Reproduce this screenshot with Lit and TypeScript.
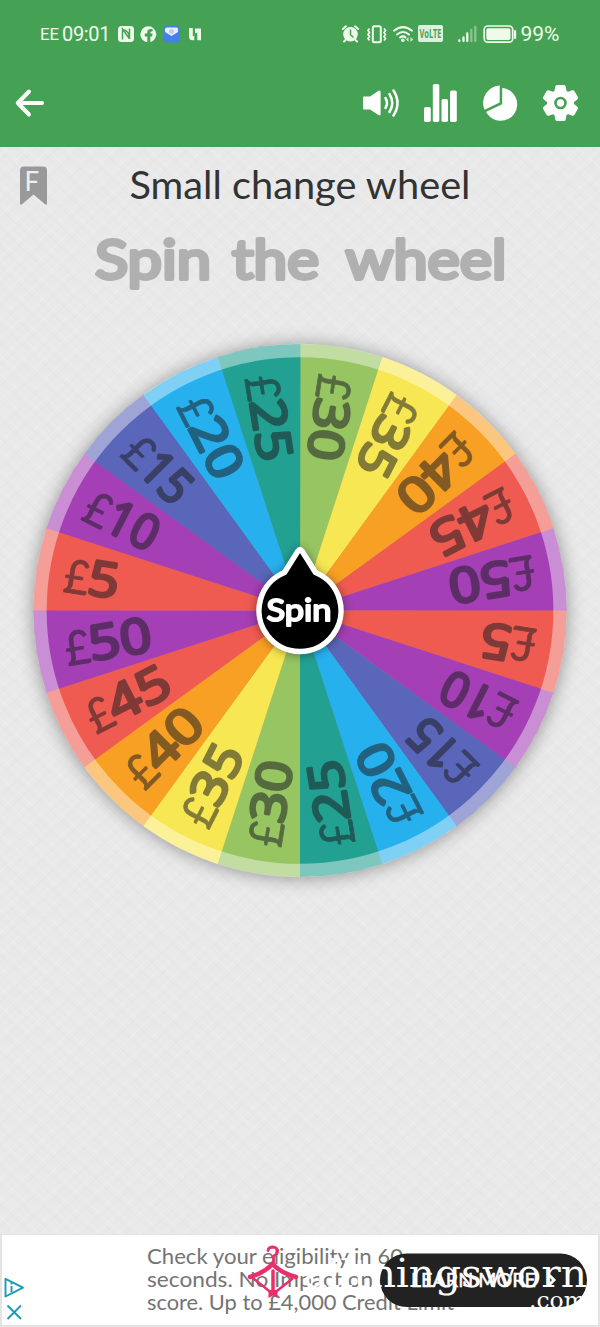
import { LitElement, html, css, svg } from "lit";
import { customElement } from "lit/decorators.js";

type Slice = { label: string; color: string; len: number };

const CYCLE: Slice[] = [
  { label: "30", color: "#96c562", len: 62 },
  { label: "35", color: "#f7e753", len: 61 },
  { label: "40", color: "#f8a024", len: 66 },
  { label: "45", color: "#ef5b51", len: 65 },
  { label: "50", color: "#a43fb5", len: 63 },
  { label: "5", color: "#ef5b51", len: 31 },
  { label: "10", color: "#a43fb5", len: 53 },
  { label: "15", color: "#5a66b9", len: 51 },
  { label: "20", color: "#27b0ee", len: 62 },
  { label: "25", color: "#22a193", len: 62 },
];
const SLICES = [...CYCLE, ...CYCLE];
const R = 266.5;

const point = (deg: number, r: number) => {
  const a = (deg * Math.PI) / 180;
  return `${(r * Math.sin(a)).toFixed(2)} ${(-r * Math.cos(a)).toFixed(2)}`;
};

@customElement("status-bar")
export class StatusBar extends LitElement {
  static styles = css`
    :host { display: block; height: 68px; }
    svg { display: block; }
    text { font-family: Roboto, sans-serif; fill: #effbea; }
    .volte { font-family: "Open Sans", sans-serif; font-weight: 700; fill: #45a254; }
  `;
  render() {
    return html`<svg width="600" height="68" viewBox="0 0 600 68">
      <text x="40" y="40.300" font-size="16" textLength="19" lengthAdjust="spacingAndGlyphs">EE</text>
      <text x="62" y="41" font-size="20" textLength="48.500">09:01</text>
      <rect x="118" y="26" width="16" height="16" rx="3.500" fill="#effbea"/>
      <path d="M122.500 39.500V29L129.500 38.800M122.700 29.500Q129.800 31 129.500 39V28.500" stroke="#45a254" stroke-width="1.500" fill="none"/>
      <circle cx="148.300" cy="34.300" r="8" fill="#effbea"/>
      <path d="M147.300 42.500V36.500H144.800V33.500H147.300V32C147.300 29.600 149 28.500 152.500 29V31.600C150.600 31.500 150.300 31.800 150.300 33.500H152.600L152.100 36.500H150.300V42.500Z" fill="#45a254"/>
      <rect x="163.500" y="26" width="16.500" height="16.500" rx="3" fill="#467fe6"/>
      <path d="M165 29Q165 27.500 167 27.500H176.500Q178 27.500 178 29V32L171.500 36L165 32Z" fill="#eaf2ff"/>
      <circle cx="171.500" cy="31.500" r="2.500" fill="#bccdf3"/>
      <path d="M189 28H192.800V36.500L194.300 35.500V40.300H192.500Q189 40 189 36.500ZM195 28.500H201V40.300H197.300V32.500L195 33.500Z" fill="#effbea"/>
      <g fill="#effbea" stroke="#effbea" stroke-linecap="round">
        <circle cx="350.500" cy="34.300" r="7.300" stroke="none"/>
        <path d="M342.800 29L346 26.300M355 26.300L358.200 29M345.500 40L344 41.500M355.500 40L357 41.500" stroke-width="2"/>
        <path d="M350.500 30V34.700L353 37" fill="none" stroke="#45a254" stroke-width="1.500"/>
      </g>
      <g fill="none" stroke="#effbea">
        <rect x="372.800" y="26.300" width="8" height="16" rx="1.500" stroke-width="2"/>
        <path d="M369.500 28.500L368 30.500L369.500 32.500L368 34.500L369.500 36.500L368 38.500L369.500 40.500M384 28.500L385.500 30.500L384 32.500L385.500 34.500L384 36.500L385.500 38.500L384 40.500" stroke-width="1.700"/>
        <g stroke-width="2" stroke-linecap="round">
          <path d="M394 30.700Q403 23.500 412 30.700M397 34.500Q403 29.500 409 34.500M400 37.500Q403 35.300 405.500 37.500"/>
        </g>
      </g>
      <circle cx="402.800" cy="40.300" r="1.800" fill="#effbea"/>
      <path d="M408.500 37V42L406 39.500ZM410.500 37V42L413.300 39.500Z" fill="#effbea" opacity=".8"/>
      <rect x="418" y="25" width="25" height="17" rx="2" fill="#dff1dc"/>
      <text class="volte" x="419.500" y="38.200" font-size="11.500" textLength="22" lengthAdjust="spacingAndGlyphs">VoLTE</text>
      <g stroke="#effbea" stroke-width="2.300" stroke-linecap="round">
        <path d="M459.300 40.300V41M463.500 37.500V41M467.300 33.500V41"/>
        <path d="M471.300 30V41M475.300 26.800V41" opacity=".4"/>
      </g>
      <rect x="484.200" y="26" width="28.500" height="16.200" rx="3.500" fill="none" stroke="#effbea" stroke-width="1.700"/>
      <rect x="486.300" y="28.200" width="24.200" height="11.800" rx="1.800" fill="#effbea"/>
      <rect x="514" y="30" width="2.200" height="9" rx="1" fill="#effbea"/>
      <text x="520.500" y="41" font-size="20" textLength="39" lengthAdjust="spacingAndGlyphs">99%</text>
    </svg>`;
  }
}

@customElement("tool-bar")
export class ToolBar extends LitElement {
  static styles = css`
    :host { display: flex; align-items: center; height: 70px; padding: 0 20px 0 14px; }
    .gap { flex: 1; }
    .tools { display: flex; gap: 20px; }
    svg { display: block; }
  `;
  render() {
    const teeth = [0, 60, 120, 180, 240, 300];
    return html`
      <svg width="32" height="32" viewBox="0 0 32 32">
        <path d="M28 16H4M15 4.500L3.800 16L15 27.500" fill="none" stroke="#fff" stroke-width="4" stroke-linecap="round" stroke-linejoin="round"/>
      </svg>
      <span class="gap"></span>
      <div class="tools">
        <svg width="40" height="40" viewBox="0 0 40 40">
          <path d="M4 13.500H10L18.500 7.800Q20.600 6.800 20.600 9V31Q20.600 33.200 18.500 32L10 26.500H4Q3 26.500 3 25.500V14.500Q3 13.500 4 13.500Z" fill="#fff"/>
          <path d="M25.500 15Q28.500 20 25.500 25M29.500 11Q35 20 29.500 29M33.500 7.500Q41.500 20 33.500 32.500" fill="none" stroke="#fff" stroke-width="2.500" stroke-linecap="round"/>
        </svg>
        <svg width="40" height="40" viewBox="0 0 40 40" fill="#fff">
          <rect x="4" y="24" width="6.800" height="15" rx="1.800"/>
          <rect x="12.800" y="1" width="6.500" height="38" rx="1.800"/>
          <rect x="21.500" y="16" width="6.500" height="23" rx="1.800"/>
          <rect x="30" y="7.500" width="6.800" height="31.500" rx="1.800"/>
        </svg>
        <svg width="40" height="40" viewBox="-0.700 0 40 40" fill="#fff">
          <path d="M18.800 2.500Q19 2.500 19 3V19.500L4.500 26.500Q3.800 26.800 3.500 26A17.500 17.500 0 0 1 18.500 2.500Z"/>
          <path d="M21.500 5.500Q21.500 4.700 22.500 5A16.500 16.500 0 1 1 5.700 29.500Q5.500 28.800 6.200 28.500L21.500 21.200Z"/>
        </svg>
        <svg width="40" height="40" viewBox="-0.500 0 40 40">
          <g fill="#fff">
            <circle cx="20" cy="20" r="13.500"/>
            ${teeth.map((t) => svg`<path transform=${`rotate(${t} 20 20)`} d="M14.800 3.500Q15.200 2 16.500 2H23.500Q24.800 2 25.200 3.500L26.200 9H13.800Z"/>`)}
          </g>
          <circle cx="20" cy="20" r="5" fill="none" stroke="#45a254" stroke-width="2.600"/>
        </svg>
      </div>`;
  }
}

@customElement("prize-wheel")
export class PrizeWheel extends LitElement {
  static styles = css`
    :host { display: block; }
    svg { display: block; overflow: visible; }
    .wheel { filter: drop-shadow(0 1px 9px rgba(0, 0, 0, 0.38)); }
    .labels { opacity: 0.54; fill: #1e1e22; stroke: #1e1e22; stroke-linejoin: round; }
    .digits { font-family: "Open Sans", sans-serif; font-weight: 400; stroke-width: 3.2; }
    .pound { font-family: Lato, sans-serif; font-weight: 400; stroke-width: 0.8; }
    .hub { filter: drop-shadow(0 1px 5px rgba(0, 0, 0, 0.4)); }
    .spin { font-family: Lato, sans-serif; fill: #fff; stroke: #fff; stroke-width: 2; stroke-linejoin: round; }
  `;
  render() {
    return html`<svg width="600" height="560" viewBox="-300 -280.500 600 560">
      <g class="wheel">
        ${SLICES.map((s, i) => svg`<path d=${`M0 0L${point(i * 18, R)}A${R} ${R} 0 0 1 ${point(i * 18 + 18.1, R)}Z`} fill=${s.color}/>`)}
      </g>
      <circle r="260" fill="none" stroke="#fff" stroke-opacity=".41" stroke-width="13.300"/>
      <g class="labels">
        ${SLICES.map((s, i) => svg`<g transform=${`rotate(${i * 18 + 9 + 90})`}>
          <text class="pound" x="-238" y="18.500" font-size="47" textLength="25" lengthAdjust="spacingAndGlyphs">£</text>
          <text class="digits" x="-214" y="17" font-size="48" textLength=${s.len} lengthAdjust="spacingAndGlyphs">${s.label}</text>
        </g>`)}
      </g>
      <g class="hub">
        <path d="M-15.500 -38L-2 -59.500Q0 -62.500 2 -59.500L15.500 -38A41 41 0 1 1 -15.500 -38Z" fill="#000" stroke="#fff" stroke-width="5.500" stroke-linejoin="round"/>
      </g>
      <text class="spin" x="-33.500" y="10" font-size="31" textLength="65" lengthAdjust="spacingAndGlyphs">Spin</text>
    </svg>`;
  }
}

@customElement("ad-banner")
export class AdBanner extends LitElement {
  static styles = css`
    :host { display: block; box-sizing: border-box; height: 93px; background: #fff; border: solid #e4e4e4; border-width: 1px 2px 2px; overflow: hidden; }
    svg { display: block; margin: -1px 0 0 -2px; }
    .copy { font-family: Lato, sans-serif; fill: #747474; font-size: 21px; }
    .cta { font-family: Lato, sans-serif; fill: #fff; stroke: #fff; stroke-width: 0.5; font-size: 20px; }
    .mark { font-family: "DejaVu Serif", serif; fill: #fff; }
  `;
  render() {
    return html`<svg width="600" height="93" viewBox="0 1234 600 93">
      <g fill="none" stroke="#199bb8" stroke-width="1.900" stroke-linejoin="round">
        <path d="M5.500 1278.800V1296.500L23 1287.700Z"/>
        <path d="M11.500 1286V1292.500M11.500 1282.500V1284.500M7.500 1305.500L21 1319M21 1305.500L7.500 1319"/>
      </g>
      <g class="copy">
        <text x="147" y="1264" textLength="256" lengthAdjust="spacingAndGlyphs">Check your eligibility in 60</text>
        <text x="147" y="1287" textLength="251" lengthAdjust="spacingAndGlyphs">seconds. No Impact on cr</text>
        <text x="147" y="1309.500" textLength="307" lengthAdjust="spacingAndGlyphs">score. Up to £4,000 Credit Limit</text>
      </g>
      <rect x="380" y="1253.500" width="207" height="53.500" rx="26.700" fill="#222"/>
      <text class="cta" x="411" y="1286.500" textLength="125" lengthAdjust="spacingAndGlyphs">LEARN MORE</text>
      <path d="M548 1274L554 1280L548 1286" fill="none" stroke="#fff" stroke-width="3"/>
      <text class="mark" x="303" y="1286.500" font-size="40" textLength="284" lengthAdjust="spacingAndGlyphs">allthingsworn</text>
      <text class="mark" x="529" y="1307.500" font-size="23" textLength="57" lengthAdjust="spacingAndGlyphs">.com</text>
      <g fill="none" stroke="#ec2d6c" stroke-linecap="round" stroke-linejoin="round">
        <path d="M268 1250.500Q268.500 1247 273 1247Q278 1247.500 277.500 1252Q277 1254.500 273.500 1256V1264" stroke-width="2.800"/>
        <path d="M250 1277Q264 1273 272.500 1264Q281 1273 296 1277" stroke-width="4.500"/>
        <path d="M254 1279L271 1292.500M292 1279L275 1292.500" stroke-width="2.500"/>
        <path d="M273 1271V1293" stroke-width="3.500"/>
      </g>
      <path d="M268.500 1290H277.500V1298L273 1295.500L268.500 1298Z" fill="#ec2d6c"/>
    </svg>`;
  }
}

@customElement("app-root")
export class AppRoot extends LitElement {
  static styles = css`
    :host { display: flex; flex-direction: column; width: 600px; height: 1327px; overflow: hidden; background: #e9e9e9; }
    .header { background: #45a254; height: 147px; flex: none; }
    .main {
      flex: 1; min-height: 0;
      background:
        repeating-linear-gradient(43deg, transparent 0 7px, rgba(0, 0, 0, 0.016) 8px, transparent 9px 12px, rgba(255, 255, 255, 0.16) 13px, transparent 14px),
        repeating-linear-gradient(-43deg, transparent 0 8px, rgba(0, 0, 0, 0.016) 9px, transparent 10px 13px, rgba(255, 255, 255, 0.16) 14px, transparent 15px),
        #e9e9e9;
    }
    .heading { display: block; }
    .title { font-family: Lato, sans-serif; font-size: 38px; fill: #333; }
    .subtitle { font-family: Lato, sans-serif; font-size: 54px; fill: #b0b0b0; stroke: #b0b0b0; stroke-width: 3.8; stroke-linejoin: round; }
    .flag { font-family: Lato, sans-serif; font-size: 26px; fill: #eee; }
  `;
  render() {
    return html`
      <div class="header">
        <status-bar></status-bar>
        <tool-bar></tool-bar>
      </div>
      <div class="main">
        <svg class="heading" width="600" height="183" viewBox="0 147 600 183">
          <path d="M24 166.500H43Q47 166.500 47 170.500V203.500Q47 205.500 45 204.300L33.500 194.500L22 204.300Q20 205.500 20 203.500V170.500Q20 166.500 24 166.500Z" fill="#999"/>
          <text class="flag" x="24.500" y="190.500">F</text>
          <text class="title" x="129.500" y="198.500" textLength="341" lengthAdjust="spacingAndGlyphs">Small change wheel</text>
          <text class="subtitle" x="95" y="279" textLength="116" lengthAdjust="spacingAndGlyphs">Spin</text>
          <text class="subtitle" x="232" y="279" textLength="87" lengthAdjust="spacingAndGlyphs">the</text>
          <text class="subtitle" x="345.500" y="279" textLength="161" lengthAdjust="spacingAndGlyphs">wheel</text>
        </svg>
        <prize-wheel></prize-wheel>
      </div>
      <ad-banner></ad-banner>
    `;
  }
}
